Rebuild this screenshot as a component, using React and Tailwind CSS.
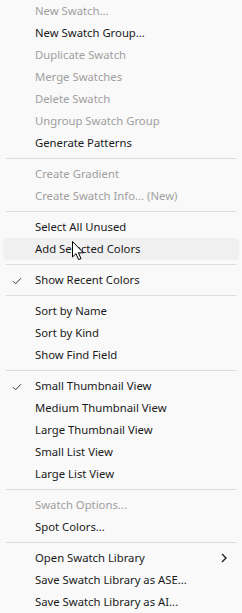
import React from 'react';

const menu = [
    { label: 'New Swatch...', disabled: true },
    { label: 'New Swatch Group...' },
    { label: 'Duplicate Swatch', disabled: true },
    { label: 'Merge Swatches', disabled: true },
    { label: 'Delete Swatch', disabled: true },
    { label: 'Ungroup Swatch Group', disabled: true },
    { label: 'Generate Patterns' },
    'sep',
    { label: 'Create Gradient', disabled: true },
    { label: 'Create Swatch Info... (New)', disabled: true },
    'sep',
    { label: 'Select All Unused' },
    { label: 'Add Selected Colors', hover: true },
    'sep',
    { label: 'Show Recent Colors', checked: true },
    'sep',
    { label: 'Sort by Name' },
    { label: 'Sort by Kind' },
    { label: 'Show Find Field' },
    'sep',
    { label: 'Small Thumbnail View', checked: true },
    { label: 'Medium Thumbnail View' },
    { label: 'Large Thumbnail View' },
    { label: 'Small List View' },
    { label: 'Large List View' },
    'sep',
    { label: 'Swatch Options...', disabled: true },
    { label: 'Spot Colors...' },
    'sep',
    { label: 'Open Swatch Library', submenu: true },
    { label: 'Save Swatch Library as ASE...' },
    { label: 'Save Swatch Library as AI...' },
];

const Check = () => (
    <svg width="10" height="8" viewBox="0 0 10 8" className="absolute left-[9px] top-[8px]">
        <path d="M1 4.2 L3.6 6.8 L9 1.2" fill="none" stroke="#333" strokeWidth="1" />
    </svg>
);

const Chevron = () => (
    <svg width="6" height="10" viewBox="0 0 6 10" className="absolute right-[12px] top-[6px]">
        <path d="M1 1 L5 5 L1 9" fill="none" stroke="#222" strokeWidth="1.4" />
    </svg>
);

const MenuItem = ({ label, disabled, checked, submenu, hover }) => (
    <div className={`relative h-[22px] mx-[3px] rounded-[4px] flex items-center pl-[32px] ${hover ? 'bg-[#f0f0f0]' : ''}`}>
        {checked && <Check />}
        <span className={`text-[11.3px] leading-none whitespace-nowrap ${disabled ? 'text-[#a0a0a0]' : 'text-[#1a1a1a]'}`}>
            {label}
        </span>
        {submenu && <Chevron />}
    </div>
);

const Cursor = () => (
    <svg width="13" height="20" viewBox="0 0 13 20" className="absolute left-[72px] top-[241px]">
        <path d="M0.5 0.5 L0.5 16 L4 12.6 L6.6 18.6 L9 17.6 L6.4 11.8 L11.4 11.8 Z" fill="#fff" stroke="#000" strokeWidth="1" strokeLinejoin="round" />
    </svg>
);

export default function App() {
    return (
        <div className="relative w-[242px] h-[613px] overflow-hidden bg-[#f9f9f9] font-['Noto_Sans',sans-serif]">
            <div className="flex flex-col">
                {menu.map((m, i) =>
                    m === 'sep' ? (
                        <div key={i} className="h-[9px] flex items-center px-[6px]">
                            <div className="h-px w-full bg-[#dcdcdc]" />
                        </div>
                    ) : (
                        <MenuItem key={i} {...m} />
                    )
                )}
            </div>
            <Cursor />
        </div>
    );
}
